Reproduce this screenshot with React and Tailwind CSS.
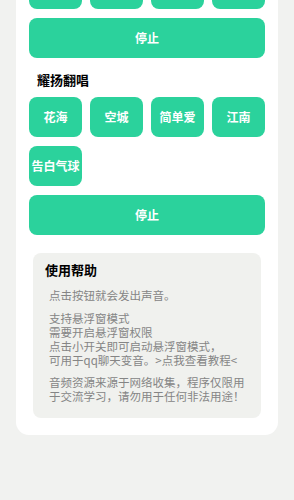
const SONGS = ['花海', '空城', '简单爱', '江南', '告白气球'];

const FONT = { fontFamily: '"Noto Sans CJK SC", "Noto Sans", sans-serif' };

function SoundButton({ label }) {
  return (
    <button className="h-10 rounded-lg bg-[#2bd29c] text-[12px] font-bold text-white whitespace-nowrap leading-none">
      {label}
    </button>
  );
}

function StopButton() {
  return (
    <button className="mt-[9px] h-10 w-full rounded-lg bg-[#2bd29c] text-[12px] font-bold text-white leading-none">
      停止
    </button>
  );
}

export default function App() {
  return (
    <div className="min-h-screen overflow-hidden bg-[#f1f2f0]" style={FONT}>
      <div className="px-4">
        <div className="-mt-[45px] rounded-[13px] bg-white px-[13px] pt-[14px] pb-[17px]">
          {/* previous group, scrolled mostly out of view */}
          <div className="grid grid-cols-4 gap-x-2">
            {['', '', '', ''].map((s, i) => (
              <SoundButton key={i} label={s} />
            ))}
          </div>
          <StopButton />

          <h2 className="mt-3 pl-2 text-[13px] font-bold leading-5 text-black">耀扬翻唱</h2>
          <div className="mt-[7px] grid grid-cols-4 gap-x-2 gap-y-[9px]">
            {SONGS.map((s) => (
              <SoundButton key={s} label={s} />
            ))}
          </div>
          <StopButton />

          <div className="mx-1 mt-[18px] rounded-lg bg-[#f0f1ee] px-3 pt-2 pb-[15px]">
            <h3 className="text-[13px] font-bold leading-[18px] text-black">使用帮助</h3>
            <div className="mt-[9px] pl-1 text-[11.5px] leading-[14px] text-[#858585]">
              <p>点击按钮就会发出声音。</p>
              <p className="mt-[9px]">
                支持悬浮窗模式
                <br />
                需要开启悬浮窗权限
                <br />
                点击小开关即可启动悬浮窗模式，
                <br />
                可用于qq聊天变音。&gt;点我查看教程&lt;
              </p>
              <p className="mt-[8px]">
                音频资源来源于网络收集，程序仅限用
                <br />
                于交流学习，请勿用于任何非法用途！
              </p>
            </div>
          </div>
        </div>
      </div>
    </div>
  );
}
